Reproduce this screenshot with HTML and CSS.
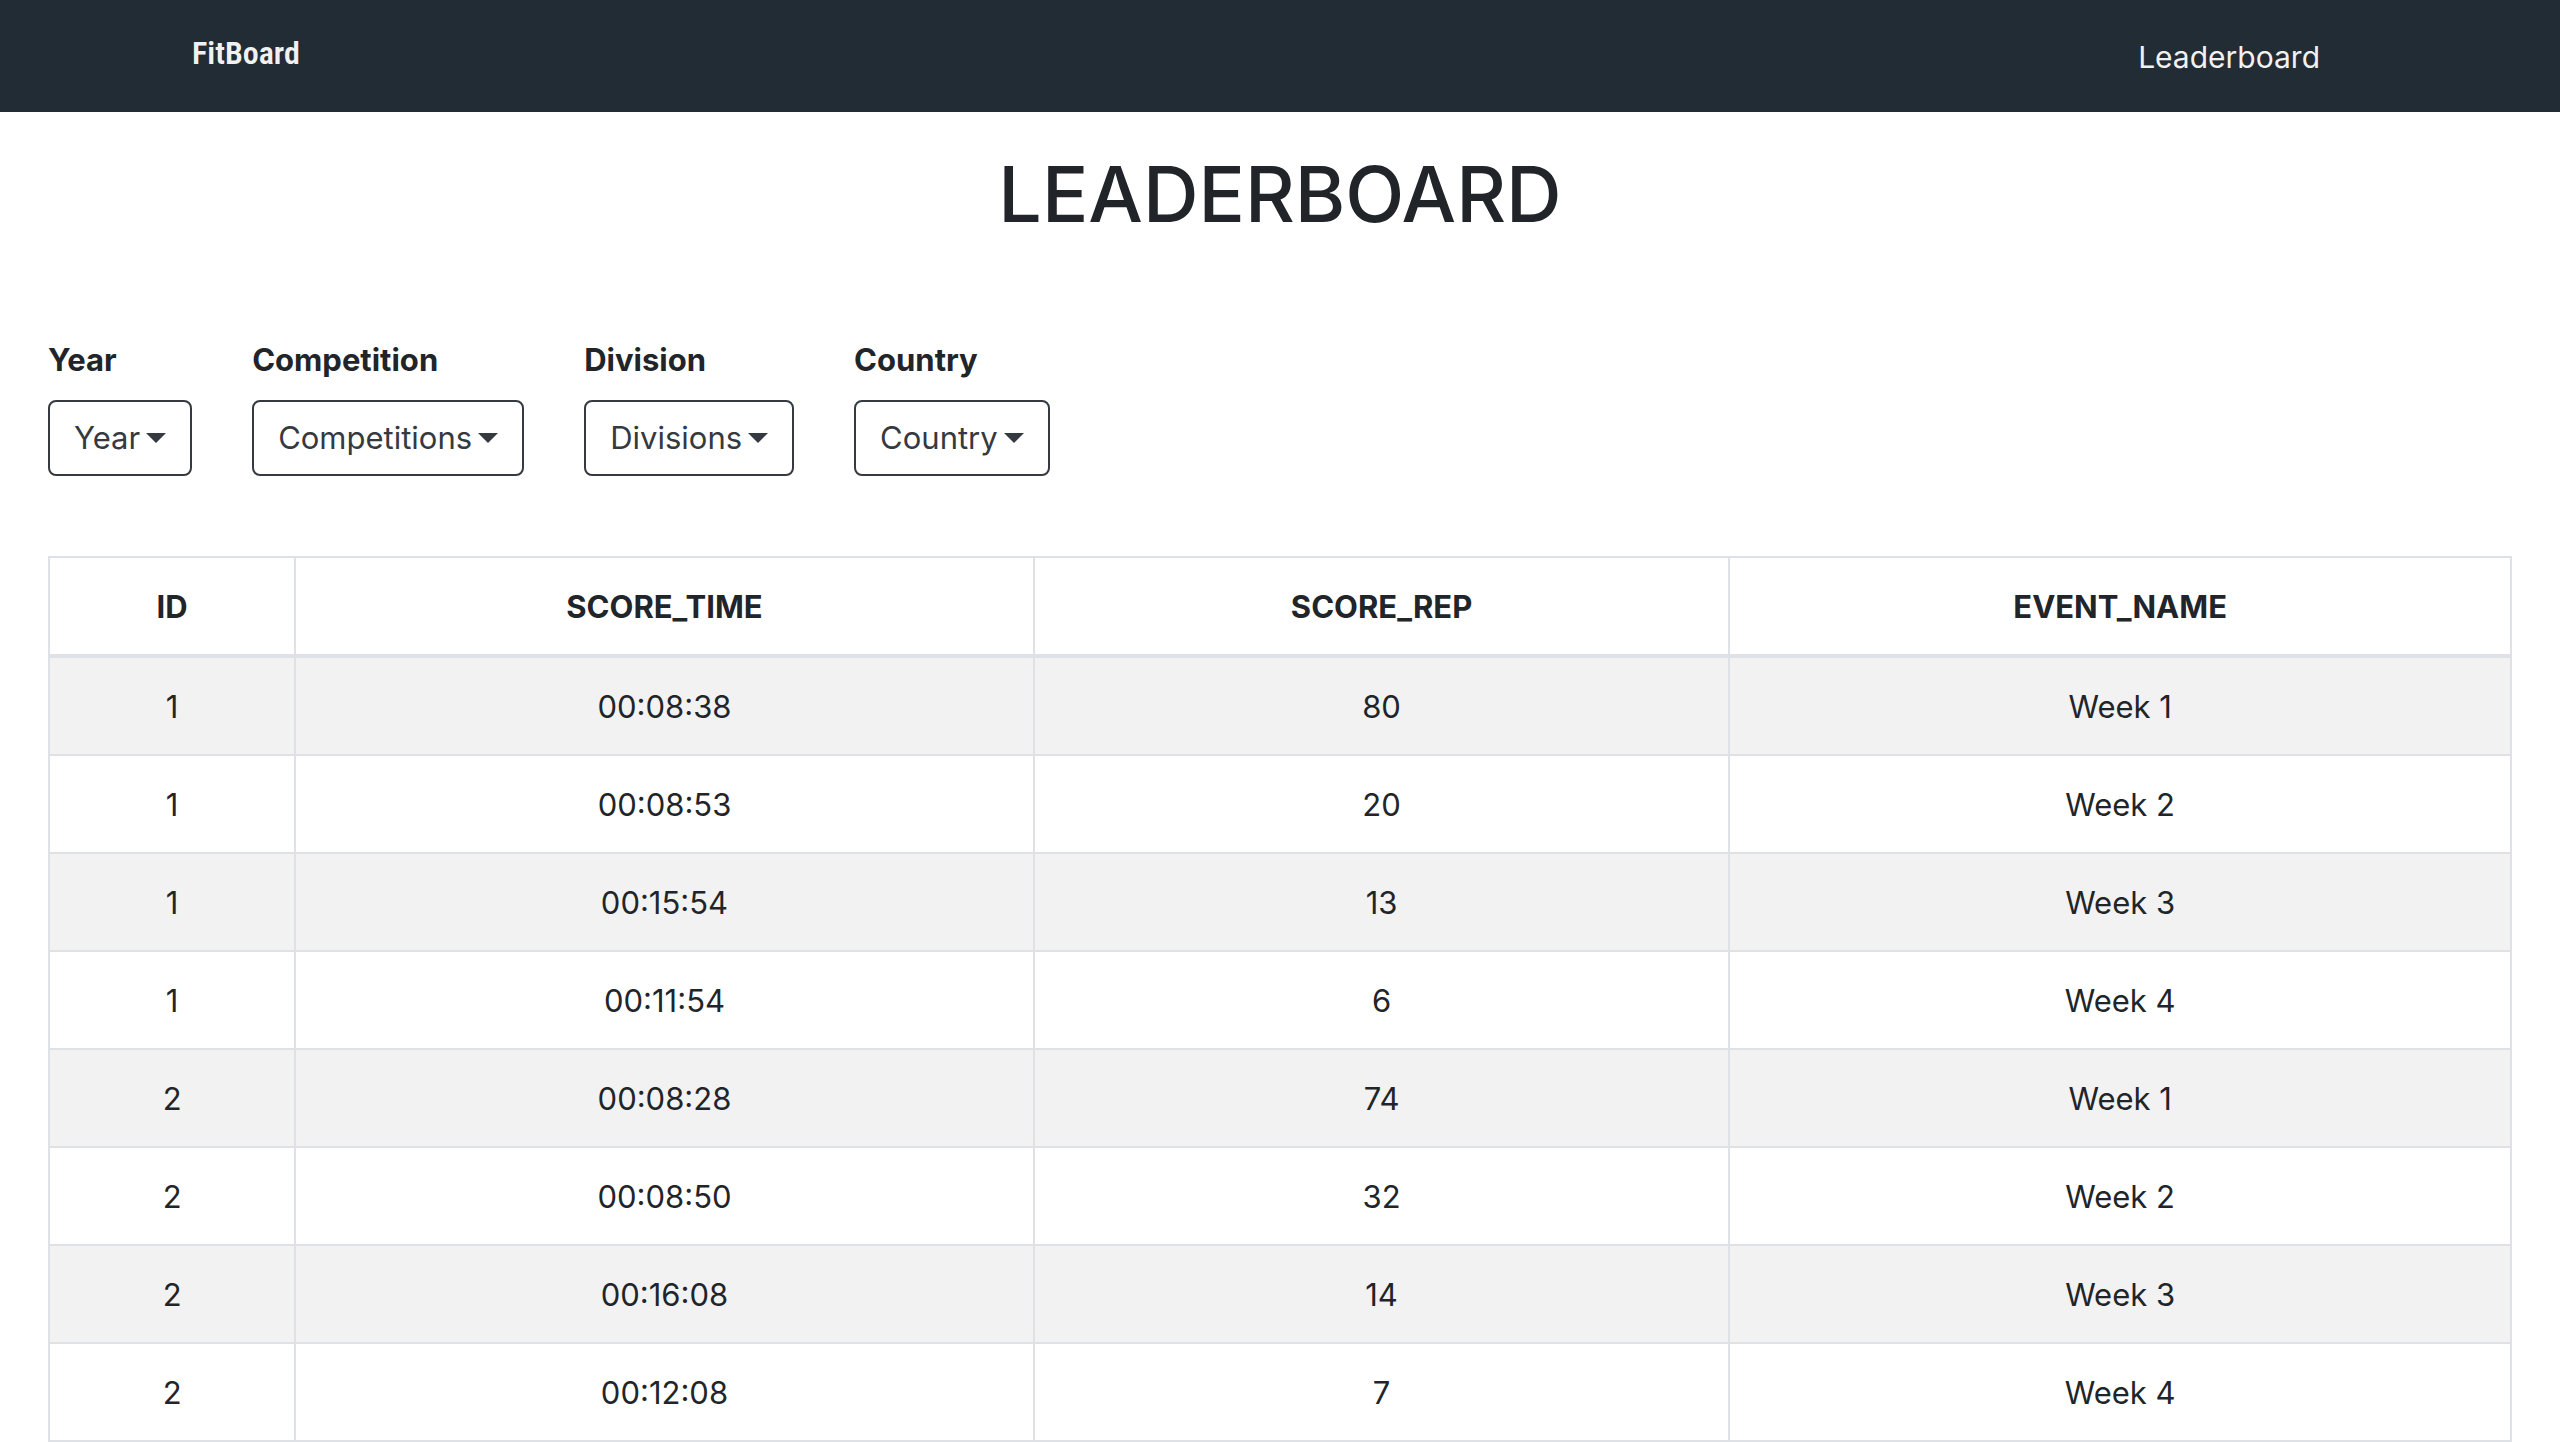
FILE: index.html
```html
<!DOCTYPE html>
<html lang="en">
<head>
<meta charset="utf-8">
<meta name="viewport" content="width=device-width, initial-scale=1">
<title>FitBoard</title>
<link rel="stylesheet" href="styles.css">
</head>
<body>
<header class="navbar">
  <a class="brand" href="#">FitBoard</a>
  <nav><a class="nav-link" href="#leaderboard">Leaderboard</a></nav>
</header>
<main class="page" id="leaderboard">
  <h1 class="title">LEADERBOARD</h1>
  <div class="filters">
    <div class="filter"><label for="year">Year</label><button class="dropdown" id="year" type="button" aria-haspopup="true">Year</button></div>
    <div class="filter"><label for="competition">Competition</label><button class="dropdown" id="competition" type="button" aria-haspopup="true">Competitions</button></div>
    <div class="filter"><label for="division">Division</label><button class="dropdown" id="division" type="button" aria-haspopup="true">Divisions</button></div>
    <div class="filter"><label for="country">Country</label><button class="dropdown" id="country" type="button" aria-haspopup="true">Country</button></div>
  </div>
  <table class="scores">
    <colgroup><col class="col-id"><col class="col-time"><col class="col-rep"><col class="col-event"></colgroup>
    <thead>
      <tr><th scope="col">ID</th><th scope="col">SCORE_TIME</th><th scope="col">SCORE_REP</th><th scope="col">EVENT_NAME</th></tr>
    </thead>
    <tbody>
      <tr><td>1</td><td>00:08:38</td><td>80</td><td>Week 1</td></tr>
      <tr><td>1</td><td>00:08:53</td><td>20</td><td>Week 2</td></tr>
      <tr><td>1</td><td>00:15:54</td><td>13</td><td>Week 3</td></tr>
      <tr><td>1</td><td>00:11:54</td><td>6</td><td>Week 4</td></tr>
      <tr><td>2</td><td>00:08:28</td><td>74</td><td>Week 1</td></tr>
      <tr><td>2</td><td>00:08:50</td><td>32</td><td>Week 2</td></tr>
      <tr><td>2</td><td>00:16:08</td><td>14</td><td>Week 3</td></tr>
      <tr><td>2</td><td>00:12:08</td><td>7</td><td>Week 4</td></tr>
    </tbody>
  </table>
</main>
</body>
</html>
```
FILE: styles.css
```css
* { box-sizing: border-box; }

body {
  margin: 0;
  background: #fff;
  color: #212529;
  font-family: Inter, "Liberation Sans", sans-serif;
  font-size: 31px;
  line-height: 48px;
}

.navbar {
  display: flex;
  align-items: flex-start;
  justify-content: space-between;
  padding: 33px 240px 31px 192px;
  background: #222c35;
}

.brand {
  color: #f1f1f1;
  font-family: "Liberation Sans Narrow", "Roboto Condensed", "DejaVu Sans Condensed", sans-serif;
  font-size: 32px;
  font-weight: 600;
  line-height: 40px;
  text-decoration: none;
}

.nav-link {
  color: #f1f1f1;
  font-size: 30px;
  text-decoration: none;
}

.page { padding: 34px 48px 0; }

.title {
  margin: 0 0 94px;
  font-size: 77px;
  font-weight: 500;
  line-height: 96px;
  text-align: center;
}

.filters {
  display: flex;
  flex-wrap: wrap;
  gap: 60px;
  margin-bottom: 80px;
}

.filter {
  display: flex;
  flex-direction: column;
  align-items: flex-start;
  gap: 16px;
}

.filter label {
  font-weight: 700;
}

.dropdown {
  display: flex;
  align-items: center;
  gap: 6px;
  padding: 12px 24px;
  border: 2px solid #343a40;
  border-radius: 8px;
  background: transparent;
  color: #343a40;
  font: inherit;
}

.dropdown::after {
  content: "";
  border-top: 10px solid;
  border-right: 10px solid transparent;
  border-left: 10px solid transparent;
}

.scores {
  width: 100%;
  table-layout: fixed;
  border-collapse: collapse;
  text-align: center;
}

.col-id { width: 10%; }
.col-time { width: 30%; }
.col-rep { width: 28.25%; }
.col-event { width: 31.75%; }

.scores th,
.scores td {
  padding: 25px 24px 23px;
  border: 2px solid #dee2e6;
}

.scores thead th { border-bottom-width: 4px; }

.scores tbody tr:nth-child(odd) { background: #f2f2f2; }
```
